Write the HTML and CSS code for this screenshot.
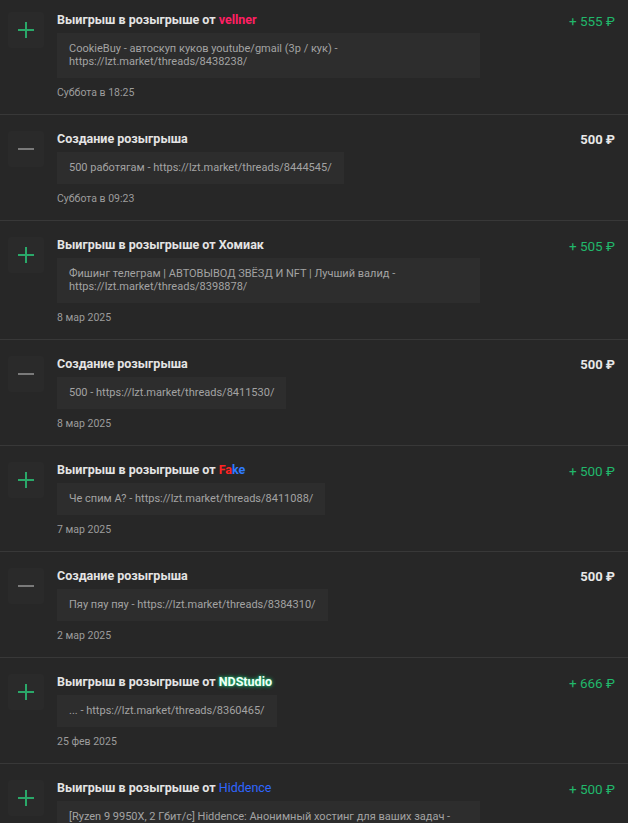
FILE: index.html
```html
<!DOCTYPE html>
<html lang="ru">
<head>
    <meta charset="UTF-8">
    <meta name="viewport" content="width=device-width, initial-scale=1.0">
    <title>Платежи</title>
    <link rel="stylesheet" href="styles.css">
</head>
<body>
    <div class="history">
        <div class="row">
            <div class="icon plus"></div>
            <div class="info">
                <div class="title">Выигрыш в розыгрыше от <span class="user u-vellner">vellner</span></div>
                <div class="desc">CookieBuy - автоскуп куков youtube/gmail (3р / кук) - https://lzt.market/threads/8438238/</div>
                <div class="date">Суббота в 18:25</div>
            </div>
            <div class="amount in">+ 555 ₽</div>
        </div>

        <div class="row">
            <div class="icon minus"></div>
            <div class="info">
                <div class="title">Создание розыгрыша</div>
                <div class="desc">500 работягам - https://lzt.market/threads/8444545/</div>
                <div class="date">Суббота в 09:23</div>
            </div>
            <div class="amount out">500 ₽</div>
        </div>

        <div class="row">
            <div class="icon plus"></div>
            <div class="info">
                <div class="title">Выигрыш в розыгрыше от <span class="user">Хомиак</span></div>
                <div class="desc">Фишинг телеграм | АВТОВЫВОД ЗВЁЗД И NFT | Лучший валид - https://lzt.market/threads/8398878/</div>
                <div class="date">8 мар 2025</div>
            </div>
            <div class="amount in">+ 505 ₽</div>
        </div>

        <div class="row">
            <div class="icon minus"></div>
            <div class="info">
                <div class="title">Создание розыгрыша</div>
                <div class="desc">500 - https://lzt.market/threads/8411530/</div>
                <div class="date">8 мар 2025</div>
            </div>
            <div class="amount out">500 ₽</div>
        </div>

        <div class="row">
            <div class="icon plus"></div>
            <div class="info">
                <div class="title">Выигрыш в розыгрыше от <span class="user u-fake"><span class="red">Fa</span><span class="blue">ke</span></span></div>
                <div class="desc">Че спим А? - https://lzt.market/threads/8411088/</div>
                <div class="date">7 мар 2025</div>
            </div>
            <div class="amount in">+ 500 ₽</div>
        </div>

        <div class="row">
            <div class="icon minus"></div>
            <div class="info">
                <div class="title">Создание розыгрыша</div>
                <div class="desc">Пяу пяу пяу - https://lzt.market/threads/8384310/</div>
                <div class="date">2 мар 2025</div>
            </div>
            <div class="amount out">500 ₽</div>
        </div>

        <div class="row">
            <div class="icon plus"></div>
            <div class="info">
                <div class="title">Выигрыш в розыгрыше от <span class="user u-nd">NDStudio</span></div>
                <div class="desc">... - https://lzt.market/threads/8360465/</div>
                <div class="date">25 фев 2025</div>
            </div>
            <div class="amount in">+ 666 ₽</div>
        </div>

        <div class="row">
            <div class="icon plus"></div>
            <div class="info">
                <div class="title">Выигрыш в розыгрыше от <span class="user u-hid">Hiddence</span></div>
                <div class="desc">[Ryzen 9 9950X, 2 Гбит/с] Hiddence: Анонимный хостинг для ваших задач - https://lzt.market/threads/8300000/</div>
                <div class="date">20 фев 2025</div>
            </div>
            <div class="amount in">+ 500 ₽</div>
        </div>
    </div>
</body>
</html>
```

FILE: styles.css
```css
body {
    margin: 0;
    background-color: #272727;
    font-family: Roboto, "Open Sans", "Liberation Sans", sans-serif;
    color: #d6d6d6;
    overflow: hidden;
}
.history {
    margin-top: -4px;
}
.row {
    display: flex;
    align-items: flex-start;
    padding: 16px 13px 14px 8px;
    border-bottom: 1px solid #383838;
}
.icon {
    position: relative;
    width: 36px;
    height: 36px;
    flex: none;
    background-color: #2a2a2a;
    border-radius: 3px;
    margin-right: 13px;
}
.icon::before, .icon::after {
    content: "";
    position: absolute;
    left: 10px;
    top: 17px;
    width: 16px;
    height: 2px;
}
.plus::before, .plus::after {
    background-color: #2aa869;
}
.plus::after {
    transform: rotate(90deg);
}
.minus::before {
    background-color: #7a7a7a;
}
.minus::after {
    display: none;
}
.info {
    flex: 1;
    min-width: 0;
}
.title {
    font-size: 12.5px;
    font-weight: bold;
    line-height: 16px;
    color: #e4e4e4;
}
.user {
    color: #e4e4e4;
}
.u-vellner {
    color: #ff1f63;
}
.u-fake .red {
    color: #ff2323;
}
.u-fake .blue {
    color: #2f7bff;
}
.u-nd {
    color: #f2fff8;
    text-shadow: 0 0 4px #1ec77a, 0 0 2px #1ec77a;
}
.u-hid {
    color: #2f66ff;
    font-weight: normal;
}
.desc {
    width: fit-content;
    max-width: 399px;
    margin-top: 5px;
    padding: 9px 12px 10px;
    background-color: #2d2d2d;
    font-size: 11px;
    line-height: 13px;
    color: #a3a3a3;
}
.date {
    margin-top: 8px;
    font-size: 10.5px;
    line-height: 14px;
    color: #9c9c9c;
}
.amount {
    flex: none;
    font-size: 13.5px;
    line-height: 18px;
    margin-left: 10px;
}
.amount.in {
    color: #21b86b;
}
.amount.out {
    color: #e8e8e8;
    font-weight: bold;
    font-size: 13px;
}
```
